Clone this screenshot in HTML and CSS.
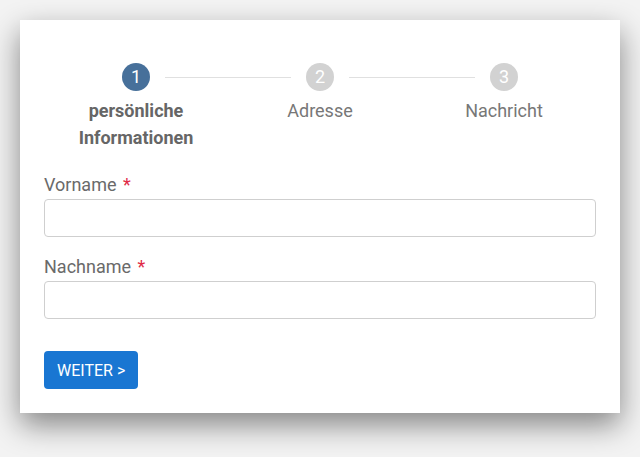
FILE: index.html
```html
<!DOCTYPE html>
<html lang="de">
<head>
<meta charset="utf-8">
<title>Formular</title>
<link rel="stylesheet" href="styles.css">
</head>
<body>
<div class="card">
  <div class="stepper">
    <div class="step active">
      <div class="step-head">
        <span class="conn hidden"></span>
        <span class="num">1</span>
        <span class="conn"></span>
      </div>
      <div class="step-label">persönliche Informationen</div>
    </div>
    <div class="step">
      <div class="step-head">
        <span class="conn"></span>
        <span class="num">2</span>
        <span class="conn"></span>
      </div>
      <div class="step-label">Adresse</div>
    </div>
    <div class="step">
      <div class="step-head">
        <span class="conn"></span>
        <span class="num">3</span>
        <span class="conn hidden"></span>
      </div>
      <div class="step-label">Nachricht</div>
    </div>
  </div>
  <form class="form">
    <div class="field">
      <label class="label">Vorname <span class="req">*</span></label>
      <input class="input" type="text">
    </div>
    <div class="field">
      <label class="label">Nachname <span class="req">*</span></label>
      <input class="input" type="text">
    </div>
    <button type="button" class="btn">WEITER &gt;</button>
  </form>
</div>
</body>
</html>
```
FILE: styles.css
```css
html, body {
  margin: 0;
  padding: 0;
}
html {
  background: #f3f3f3;
  height: 100%;
}
body {
  background: #f3f3f3;
  font-family: Roboto, "Liberation Sans", sans-serif;
  padding: 20px;
  min-height: 100%;
  box-sizing: border-box;
}
.card {
  width: 600px;
  box-sizing: border-box;
  background: #fff;
  padding: 43px 24px 24px;
  box-shadow: 0 12px 28px rgba(0, 0, 0, 0.45);
}
.stepper {
  display: grid;
  grid-template-columns: repeat(3, 1fr);
}
.step {
  display: flex;
  flex-direction: column;
  align-items: center;
}
.step-head {
  display: flex;
  align-items: center;
  width: 100%;
}
.conn {
  flex: 1;
  height: 1px;
  background: #e0e0e0;
}
.conn:first-child { margin-right: 15px; }
.conn:last-child { margin-left: 15px; }
.conn.hidden { background: transparent; }
.num {
  width: 28px;
  height: 28px;
  border-radius: 50%;
  background: #d2d2d2;
  color: #fff;
  font-size: 18px;
  line-height: 28px;
  text-align: center;
}
.step.active .num {
  background: #47709a;
}
.step-label {
  margin-top: 6px;
  font-size: 18px;
  line-height: 27px;
  color: #777;
  text-align: center;
  width: 120px;
}
.step.active .step-label {
  font-weight: 700;
  color: #666;
}
.form {
  margin-top: 20px;
  display: flex;
  flex-direction: column;
  align-items: flex-start;
}
.field {
  width: 100%;
  margin-bottom: 16px;
}
.label {
  display: block;
  font-size: 18px;
  line-height: 27px;
  color: #6a6a6a;
}
.req {
  color: #e02a47;
  margin-left: 2px;
}
.input {
  display: block;
  margin-top: 1px;
  width: 100%;
  height: 38px;
  box-sizing: border-box;
  border: 1px solid #cfcfcf;
  border-radius: 4px;
  background: #fff;
  font-family: inherit;
  font-size: 16px;
  padding: 0 10px;
}
.btn {
  margin-top: 16px;
  height: 38px;
  padding: 0 13px;
  background: #1976d2;
  color: #fff;
  border: none;
  border-radius: 4px;
  font-family: inherit;
  font-size: 16px;
  cursor: pointer;
}
```
